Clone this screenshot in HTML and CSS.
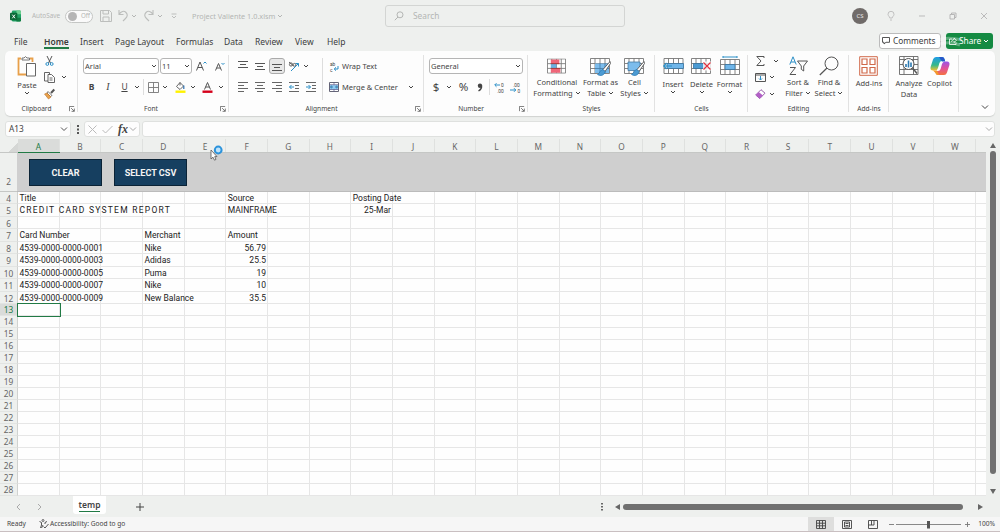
FILE: index.html
```html
<!DOCTYPE html>
<html lang="en">
<head>
<meta charset="UTF-8">
<meta name="viewport" content="width=device-width, initial-scale=1.0">
<title>Project Valiente 1.0.xlsm</title>
<link rel="stylesheet" href="styles.css">
</head>
<body>

<!-- Shared icons -->
<svg class="defs">
    <symbol id="chev" viewBox="0 0 6 4"><path d="M1 1l2 2 2-2" fill="none" stroke="currentColor"/></symbol>
    <symbol id="launch" viewBox="0 0 7 7"><path d="M.5 6V.5H6M2.500 2.500L6 6M6.200 3v3.200H3" fill="none" stroke="#555" stroke-width=".9"/></symbol>
    <symbol id="table" viewBox="0 0 20 16"><path d="M.5.5h19v15H.5zM.5 5.500h19M.5 10.500h19M5 .5v15M10 .5v15M15 .5v15" fill="#fff" stroke="#777" stroke-width=".9"/></symbol>
    <symbol id="brush" viewBox="0 0 14 16"><path d="M13 1L6 9l2 2 5.500-8z" fill="#fff" stroke="#555" stroke-width=".9"/><path d="M6 9C3 9 3 13 .5 14c3 2 7 1 7.500-3z" fill="#4c9bd3" stroke="#2478b5" stroke-width=".7"/></symbol>
</svg>

<div class="titlebar">
    <svg class="logo" viewBox="0 0 12 12"><rect x="2" y="0" width="10" height="12" rx="1.500" fill="#21a366"/><path d="M7 0h3.500Q12 0 12 1.500V4H7z" fill="#6cd08f"/><path d="M7 8h5v2.500Q12 12 10.500 12H7z" fill="#107c41"/><rect y="2.500" width="8" height="8" rx="1" fill="#0b6a37"/><path d="M2.500 4.500l3 4M5.500 4.500l-3 4" stroke="#fff"/></svg>
    <span class="autosave">AutoSave</span>
    <span class="toggle"><i></i>Off</span>
    <svg class="save" width="12" height="12" viewBox="0 0 12 12"><path d="M.5.5h9l2 2v9H.5zM3 .5v3.500h5.500V.5M3 11.500V7h6v4.500" fill="none" stroke="#bcbebc"/></svg>
    <svg class="undo" width="11" height="12" viewBox="0 0 11 12"><path d="M1 0v4.500h4.500M1 4.500C3 1 6 .5 8 2.500s1.500 4-.5 6L5 11" fill="none" stroke="#bcbebc" stroke-width="1.100"/></svg>
    <svg class="chev undo-chev"><use href="#chev"/></svg>
    <svg class="redo" width="11" height="12" viewBox="0 0 11 12"><path d="M10 0v4.500H5.500M10 4.500C8 1 5 .5 3 2.500s-1.500 4 .5 6L6 11" fill="none" stroke="#bcbebc" stroke-width="1.100"/></svg>
    <svg class="chev redo-chev"><use href="#chev"/></svg>
    <svg class="customize" width="6" height="6" viewBox="0 0 6 6"><path d="M.5 1h5M1 3l2 2 2-2" fill="none" stroke="#bcbebc"/></svg>
    <span class="filename">Project Valiente 1.0.xlsm</span>
    <svg class="chev file-chev"><use href="#chev"/></svg>
    <div class="search">
        <svg width="10" height="10" viewBox="0 0 10 10"><circle cx="6" cy="3.800" r="3" fill="none" stroke="#b4b6b4"/><path d="M4 6L.8 9.200" stroke="#b4b6b4"/></svg>
        <span>Search</span>
    </div>
    <div class="window-tools">
        <span class="avatar">CS</span>
        <svg width="8" height="10" viewBox="0 0 8 10"><path d="M2.800 7C2.800 5.500 1 5 1 3.300a3 3 0 0 1 6 0C7 5 5.200 5.500 5.200 7zM3 9h2" fill="none" stroke="#bbb" stroke-width=".9"/></svg>
        <svg width="8" height="10" viewBox="0 0 8 10"><path d="M1 5h6" stroke="#bbb"/></svg>
        <svg width="8" height="10" viewBox="0 0 8 10"><path d="M1 3.500h4.500V8H1zM2.500 3V2h4.500v4.500H6" fill="none" stroke="#b0b0b0" stroke-width=".9"/></svg>
        <svg width="8" height="10" viewBox="0 0 8 10"><path d="M1 2l6 6M7 2L1 8" stroke="#bbb"/></svg>
    </div>
</div>

<div class="tabs">
    <span class="t-file">File</span>
    <span class="t-home active">Home</span>
    <span class="t-insert">Insert</span>
    <span class="t-layout">Page Layout</span>
    <span class="t-formulas">Formulas</span>
    <span class="t-data">Data</span>
    <span class="t-review">Review</span>
    <span class="t-view">View</span>
    <span class="t-help">Help</span>
    <div class="tab-buttons">
        <span class="comments"><svg width="8" height="8" viewBox="0 0 8 8"><path d="M.5.5h7v4.800H4L2 7V5.300H.5z" fill="none" stroke="#444" stroke-width=".9"/></svg>Comments</span>
        <span class="share"><svg width="8" height="8" viewBox="0 0 8 8"><path d="M3 2H.5v5.500H7V5.500M2.500 5Q3 2.500 5 2.500V1l2.500 2.300L5 5.500V4" fill="none" stroke="#fff" stroke-width=".8"/></svg>Share<svg class="chev"><use href="#chev"/></svg></span>
        <svg class="smudge" width="34" height="28" viewBox="0 0 34 28"><path d="M2 6Q12 1 28 5M6 9q10-3 20 1M4 23q12-6 26 0-12 5-26 0" fill="none" stroke="#fff" stroke-width="3"/></svg>
    </div>
</div>

<div class="ribbon">
    <div class="group g-clipboard">
        <div class="body">
            <div class="big">
                <svg width="20" height="21" viewBox="0 0 20 21"><path d="M4 2.500H1.500v16H9M13 2.500h2.500V6" fill="none" stroke="#e8a04a" stroke-width="1.800"/><path d="M5 4V2h2Q8.500-.8 10 2h2.500v2z" fill="#fff" stroke="#666" stroke-width=".9"/><path d="M9.500 7.500h9v12.500h-9z" fill="#fff" stroke="#666"/></svg>
                <span>Paste</span>
                <svg class="chev"><use href="#chev"/></svg>
            </div>
            <div class="clip-tools">
                <svg width="9" height="10" viewBox="0 0 9 10"><path d="M2 0l3.500 7M7 0L3.500 7" stroke="#555"/><circle cx="2.300" cy="8" r="1.400" fill="none" stroke="#2b8fc7"/><circle cx="6.700" cy="8" r="1.400" fill="none" stroke="#2b8fc7"/></svg>
                <svg width="11" height="11" viewBox="0 0 11 11"><path d="M4 9H.5V.5h5v2" fill="none" stroke="#555" stroke-width=".9"/><path d="M4 2.500h3.500l3 3v5H4zM5.500 6h3M5.500 8h3" fill="#fff" stroke="#555" stroke-width=".9"/></svg>
                <svg width="11" height="10" viewBox="0 0 11 10"><path d="M10.300.5L7 4" stroke="#555" stroke-width="2"/><path d="M4 2.500l4 4-1.500 1L3 4z" fill="#fff" stroke="#555" stroke-width=".8"/><path d="M3 4l4 4-2.500 2L.5 5z" fill="#e9a24c" stroke="#b8722a" stroke-width=".6"/></svg>
            </div>
            <svg class="chev"><use href="#chev"/></svg>
        </div>
        <div class="label">Clipboard</div>
        <svg class="launch"><use href="#launch"/></svg>
    </div>

    <div class="group g-font">
        <div class="row row1">
            <span class="select">Arial<svg class="chev"><use href="#chev"/></svg></span>
            <span class="select">11<svg class="chev"><use href="#chev"/></svg></span>
            <svg width="11" height="10" viewBox="0 0 11 10"><path d="M.5 9.500L4 1l3.500 8.500M1.800 6.500h4.400" fill="none" stroke="#555"/><path d="M7.500 2.500L9 1l1.500 1.500" fill="none" stroke="#2b8fc7"/></svg>
            <svg width="10" height="9" viewBox="0 0 10 9"><path d="M.5 8.500L3.500 1.500l3 7M1.600 6h3.800" fill="none" stroke="#555"/><path d="M6.500 1L8 2.500 9.500 1" fill="none" stroke="#2b8fc7"/></svg>
        </div>
        <div class="row row2">
            <b>B</b><em>I</em><u>U</u>
            <svg class="chev"><use href="#chev"/></svg>
            <span class="sep"></span>
            <svg width="11" height="11" viewBox="0 0 11 11"><path d="M.5.5h10v10H.5zM5.500.5v10M.5 5.500h10" fill="none" stroke="#777" stroke-width=".9"/></svg>
            <svg class="chev"><use href="#chev"/></svg>
            <svg width="11" height="11" viewBox="0 0 11 11"><path d="M5 .5L1.500 4.500 5 7.500l3.500-3.500zM5 .5v3" fill="#fff" stroke="#555" stroke-width=".9"/><path d="M8.800 3.500v3.500" stroke="#2b6fb0" stroke-width="1.200"/><path d="M.5 9.700h10" stroke="#fff200" stroke-width="2.400"/></svg>
            <svg class="chev"><use href="#chev"/></svg>
            <svg width="11" height="11" viewBox="0 0 11 11"><path d="M2.500 7.500l3-7 3 7M3.500 5h4" fill="none" stroke="#555"/><path d="M.5 9.700h10" stroke="#d4001a" stroke-width="2.400"/></svg>
            <svg class="chev"><use href="#chev"/></svg>
        </div>
        <div class="label">Font</div>
        <svg class="launch"><use href="#launch"/></svg>
    </div>

    <div class="group g-align">
        <div class="align-body">
            <div class="align-icons">
                <svg width="10" height="10" viewBox="0 0 10 10"><path d="M0 .5h10M2 3.500h6M0 6.500h10" stroke="#555"/></svg>
                <svg width="10" height="10" viewBox="0 0 10 10"><path d="M0 2.500h10M2 5.500h6M0 8.500h10" stroke="#555"/></svg>
                <span class="pressed"><svg width="10" height="10" viewBox="0 0 10 10"><path d="M0 3.500h10M2 6.500h6M0 9.500h10" stroke="#555"/></svg></span>
                <svg width="12" height="11" viewBox="0 0 12 11"><circle cx="3" cy="3.500" r="1.600" fill="none" stroke="#555" stroke-width=".9"/><path d="M1 1l4.500 4" stroke="#555" stroke-width=".9"/><circle cx="6.500" cy="3.800" r="1.400" fill="none" stroke="#555" stroke-width=".9"/><path d="M3 10l7.500-7.500M7.500 2.500h3v3" fill="none" stroke="#2b8fc7"/></svg>
                <svg class="chev"><use href="#chev"/></svg>
                <svg width="10" height="10" viewBox="0 0 10 10"><path d="M0 .5h10M0 3.500h6M0 6.500h10M0 9.500h6" stroke="#555" stroke-width=".9"/></svg>
                <svg width="10" height="10" viewBox="0 0 10 10"><path d="M0 .5h10M2 3.500h6M0 6.500h10M2 9.500h6" stroke="#555" stroke-width=".9"/></svg>
                <svg width="10" height="10" viewBox="0 0 10 10"><path d="M0 .5h10M4 3.500h6M0 6.500h10M4 9.500h6" stroke="#555" stroke-width=".9"/></svg>
                <svg width="10" height="10" viewBox="0 0 10 10"><path d="M0 .5h10M6 3.500h4M6 6.500h4M0 9.500h10" stroke="#555" stroke-width=".9"/><path d="M5 5H.5M2.500 3l-2 2 2 2" fill="none" stroke="#2b8fc7"/></svg>
                <svg width="10" height="10" viewBox="0 0 10 10"><path d="M0 .5h10M6 3.500h4M6 6.500h4M0 9.500h10" stroke="#555" stroke-width=".9"/><path d="M0 5h4.500M2.500 3l2 2-2 2" fill="none" stroke="#2b8fc7"/></svg>
            </div>
            <div class="wrap-merge">
                <div><svg width="10" height="11" viewBox="0 0 10 11"><text x="1" y="4.500" class="icon-text">ab</text><text x="1" y="10.500" class="icon-text">c</text><path d="M9 5v3H5.500M7 6.300L5.200 8 7 9.700" fill="none" stroke="#2b8fc7"/></svg><span>Wrap Text</span></div>
                <div><svg width="10" height="10" viewBox="0 0 10 10"><path d="M.5.5h9v9h-9z" fill="#fff" stroke="#667"/><path d="M1 3h8v4.500H1z" fill="#8fcaf0"/><path d="M.5 2.700h9M.5 7.500h9M5 .5v2M5 7.500v2" stroke="#558"  stroke-width=".7"/><path d="M1.500 5h2.500M6 5h2.500M2.800 3.800L1.500 5l1.300 1.200M7.200 3.800L8.500 5 7.200 6.200" fill="none" stroke="#145f96" stroke-width=".7"/></svg><span>Merge &amp; Center</span><svg class="chev"><use href="#chev"/></svg></div>
            </div>
        </div>
        <div class="label">Alignment</div>
        <svg class="launch"><use href="#launch"/></svg>
    </div>

    <div class="group g-number">
        <div class="row row1"><span class="select">General<svg class="chev"><use href="#chev"/></svg></span></div>
        <div class="row row2">
            <span class="sym">$</span>
            <svg class="chev"><use href="#chev"/></svg>
            <span class="sym">%</span>
            <svg width="6" height="9" viewBox="0 0 6 9"><circle cx="3" cy="2.700" r="2.200" fill="#444"/><path d="M4.500 2.500Q5 6 1.500 8" fill="none" stroke="#444" stroke-width="1.400"/></svg>
            <span class="sep"></span>
            <svg width="11" height="11" viewBox="0 0 11 11"><text x="7" y="4.500" class="icon-text">0</text><text x="3" y="10.500" class="icon-text">.00</text><path d="M6 3H1M2.500 1.200L.7 3l1.800 1.800" fill="none" stroke="#2b8fc7"/></svg>
            <svg width="11" height="11" viewBox="0 0 11 11"><text x="3" y="4.500" class="icon-text">.00</text><text x="7.500" y="10.500" class="icon-text">0</text><path d="M0 8h5.500M4 6.200L5.800 8 4 9.800" fill="none" stroke="#2b8fc7"/></svg>
        </div>
        <div class="label">Number</div>
        <svg class="launch"><use href="#launch"/></svg>
    </div>

    <div class="group g-styles">
        <div class="body">
            <div class="big">
                <svg width="19" height="17" viewBox="0 0 20 17"><use href="#table" width="20" height="16"/><path d="M4 1h9v4.500H4zM4 10.500h10V15H4z" fill="#ef6679"/><path d="M4 5.500h6v5H4z" fill="#6cb0e2"/><path d="M4 5.500h9M4 10.500h10" stroke="#a33"/></svg>
                <span>Conditional<br>Formatting <svg class="chev"><use href="#chev"/></svg></span>
            </div>
            <div class="big">
                <svg width="21" height="17" viewBox="0 0 21 17"><use href="#table" width="20" height="16"/><path d="M5 5.500h14v9.500H5z" fill="#7cbcec"/><path d="M5 10.500h14M10 5v10M15 5v10" stroke="#4178a5" stroke-width=".8"/><use href="#brush" x="7" y="2" width="14" height="17"/></svg>
                <span>Format as<br>Table <svg class="chev"><use href="#chev"/></svg></span>
            </div>
            <div class="big">
                <svg width="21" height="17" viewBox="0 0 21 17"><use href="#table" width="20" height="16"/><path d="M4 4h12v8.500H4z" fill="#7cbcec" stroke="#4178a5" stroke-width=".8"/><use href="#brush" x="7" y="2" width="14" height="17"/></svg>
                <span>Cell<br>Styles <svg class="chev"><use href="#chev"/></svg></span>
            </div>
        </div>
        <div class="label">Styles</div>
    </div>

    <div class="group g-cells">
        <div class="body">
            <div class="big">
                <svg width="21" height="17" viewBox="0 0 21 17"><use href="#table" width="21" height="16"/><path d="M4 5.500h16.500v5H4z" fill="#6fb6ea" stroke="#37739f" stroke-width=".8"/><path d="M9 8H1M3.500 5L.8 8l2.700 3" fill="none" stroke="#2b8fc7" stroke-width="1.200"/></svg>
                <span>Insert</span><svg class="chev"><use href="#chev"/></svg>
            </div>
            <div class="big">
                <svg width="21" height="17" viewBox="0 0 21 17"><use href="#table" width="20" height="16"/><path d="M2.500 5.500h11v5h-11z" fill="#4c9bd3" stroke="#37739f" stroke-width=".8"/><path d="M12 3.500h8v9h-8z" fill="#fff" opacity=".8"/><path d="M12.500 4.500l7 7M19.500 4.500l-7 7" stroke="#e0303e" stroke-width="1.200"/></svg>
                <span>Delete</span><svg class="chev"><use href="#chev"/></svg>
            </div>
            <div class="big">
                <svg width="20" height="19" viewBox="0 0 20 19"><path d="M3 1h14M3 0v2M17 0v2" stroke="#2b8fc7"/><use href="#table" y="3" width="20" height="16"/><path d="M5 8.500h10v5H5z" fill="#6fb6ea" stroke="#37739f" stroke-width=".8"/></svg>
                <span>Format</span><svg class="chev"><use href="#chev"/></svg>
            </div>
        </div>
        <div class="label">Cells</div>
    </div>

    <div class="group g-editing">
        <div class="body">
            <div class="edit-tools">
                <svg width="9" height="10" viewBox="0 0 9 10"><path d="M8 2V.5H.8L5 5 .8 9.500H8V8" fill="none" stroke="#555"/></svg><svg class="chev sum-chev"><use href="#chev"/></svg>
                <svg width="11" height="9" viewBox="0 0 11 9"><path d="M.5.5h10v8H.5zM.5 2h10" fill="none" stroke="#555"/><path d="M5.500 3v4M4 5.500L5.500 7 7 5.500" fill="none" stroke="#2b8fc7"/></svg><svg class="chev"><use href="#chev"/></svg>
                <svg width="11" height="10" viewBox="0 0 11 10"><path d="M.7 6L6 .7l4 3.500L4.800 9.500z" fill="#fff" stroke="#8a4a9e" stroke-width=".9"/><path d="M.7 6l3-3L8 6.500l-3.200 3z" fill="#b25fc6"/></svg><svg class="chev"><use href="#chev"/></svg>
            </div>
            <div class="big">
                <svg width="19" height="20" viewBox="0 0 19 20"><path d="M.8 8.500L4 .8l3.200 7.700M2 6h4" fill="none" stroke="#2b8fc7"/><path d="M1 11.500h5.500L1 18.500h6" fill="none" stroke="#555"/><path d="M8.500 5h10l-3.800 5v5l-2.400-1.700V10z" fill="none" stroke="#555"/></svg>
                <span>Sort &amp;<br>Filter <svg class="chev"><use href="#chev"/></svg></span>
            </div>
            <div class="big">
                <svg width="20" height="20" viewBox="0 0 20 20"><circle cx="12.500" cy="7.500" r="6.500" fill="none" stroke="#555"/><path d="M8 12L.8 19" stroke="#555" stroke-width="1.200"/></svg>
                <span>Find &amp;<br>Select <svg class="chev"><use href="#chev"/></svg></span>
            </div>
        </div>
        <div class="label">Editing</div>
    </div>

    <div class="group g-addins">
        <div class="body">
            <div class="big">
                <svg width="19" height="20" viewBox="0 0 19 20"><path d="M.7.700h17.600v18.600H.7z" fill="#fff" stroke="#d0694a"/><path d="M3 3h5v5.500H3zM11 3h5v5.500h-5zM3 11.500h5V17H3zM11 11.500h5V17h-5z" fill="none" stroke="#d0694a" stroke-width="1.200"/></svg>
                <span>Add-ins</span>
            </div>
        </div>
        <div class="label">Add-ins</div>
    </div>

    <div class="group g-copilot">
        <div class="body">
            <div class="big">
                <svg width="20" height="20" viewBox="0 0 20 20"><path d="M.5.500h18.500v18H.5zM.5 3.500H19M.5 8.500H19M.5 13.500H19M5 .5v18M14.500 .5v18" fill="none" stroke="#666" stroke-width=".9"/><circle cx="9.500" cy="8" r="5.500" fill="#fff" stroke="#555"/><path d="M7 11V8M9.500 11.500V4.500M12 11V6.500" stroke="#2b78b0" stroke-width="1.600"/><path d="M13.500 12l4.500 5.500" stroke="#555" stroke-width="1.500"/></svg>
                <span>Analyze<br>Data</span>
            </div>
            <div class="big">
                <svg width="20" height="20" viewBox="0 0 20 20">
                    <defs>
                        <linearGradient id="cp1" x1="0" y1="0" x2="0" y2="1"><stop offset="0" stop-color="#1f9be8"/><stop offset=".6" stop-color="#35b98a"/><stop offset="1" stop-color="#f2c230"/></linearGradient>
                        <linearGradient id="cp2" x1="0" y1="0" x2="0" y2="1"><stop offset="0" stop-color="#9a55e8"/><stop offset=".5" stop-color="#e1529b"/><stop offset="1" stop-color="#f4713f"/></linearGradient>
                    </defs>
                    <path d="M6 1h6q2 0 2.500 2l.5 2h-3q-2 0-2.600 2L8 12q-.6 2.500-3 2.500H3Q0 14.500.6 11L3 3.500Q3.800 1 6 1z" fill="url(#cp1)"/>
                    <path d="M14 19H8q-2 0-2.500-2L5 15h3q2 0 2.600-2L12 8q.6-2.500 3-2.500h2q3 0 2.400 3.500L17 16.500Q16.200 19 14 19z" fill="url(#cp2)"/>
                    <path d="M9 1h3q2 0 2.500 2l.6 2.500H12z" fill="#2757c9"/>
                    <path d="M3 14.500h4L9 19H8q-2 0-2.500-2z" fill="#f39a2d"/>
                </svg>
                <span>Copilot</span>
            </div>
        </div>
    </div>
    <svg class="collapse" width="8" height="6" viewBox="0 0 8 6"><path d="M1 1.500l3 3 3-3" fill="none" stroke="#444"/></svg>
</div>

<div class="formula-bar">
    <div class="name-box">A13<svg width="8" height="6" viewBox="0 0 8 6"><path d="M1 1.500l3 3 3-3" fill="none" stroke="#555"/></svg></div>
    <svg class="dots" width="2" height="9" viewBox="0 0 2 9"><path d="M0 0h2v2H0zM0 3.500h2v2H0zM0 7h2v2H0z" fill="#555"/></svg>
    <div class="fx-box">
        <svg width="9" height="9" viewBox="0 0 9 9"><path d="M.5.500l8 8M8.500.5l-8 8" stroke="#bbb"/></svg>
        <svg width="11" height="9" viewBox="0 0 11 9"><path d="M.5 5L3.500 8l7-7" fill="none" stroke="#bbb"/></svg>
        <span class="fx">fx</span>
        <svg class="gray" width="8" height="6" viewBox="0 0 8 6"><path d="M1 1.500l3 3 3-3" fill="none" stroke="#aaa"/></svg>
    </div>
    <div class="formula"><svg width="8" height="6" viewBox="0 0 8 6"><path d="M1 1.500l3 3 3-3" fill="none" stroke="#aaa"/></svg></div>
</div>

<div class="sheet-area">
    <div class="sheet">
        <div class="col-heads" id="colHeads"><span class="corner"></span></div>
        <div class="banner">
            <div class="banner-head">2</div>
            <div class="banner-body">
                <button>CLEAR</button>
                <button>SELECT CSV</button>
            </div>
        </div>
        <div class="rows" id="rows"></div>
        <svg class="pointer" width="14" height="16" viewBox="0 0 14 16"><circle cx="9.200" cy="5" r="3.400" fill="#bfe3fa" stroke="#2c93db" stroke-width="2"/><path d="M2 5v9l2-1.800 1.500 3 1.500-.8-1.300-2.800H8z" fill="#fff" stroke="#555" stroke-width=".8"/></svg>
    </div>
    <div class="vscroll"><i class="up"></i><i class="thumb"></i><i class="down"></i></div>
</div>

<div class="sheet-tabs">
    <svg class="prev" width="5" height="8" viewBox="0 0 5 8"><path d="M4 1L1 4l3 3" fill="none" stroke="#aaa"/></svg>
    <svg class="next" width="5" height="8" viewBox="0 0 5 8"><path d="M1 1l3 3-3 3" fill="none" stroke="#aaa"/></svg>
    <div class="sheet-tab"><span>temp</span></div>
    <svg class="plus" width="8" height="8" viewBox="0 0 8 8"><path d="M4 0v8M0 4h8" stroke="#444"/></svg>
    <svg class="grip" width="2" height="8" viewBox="0 0 2 8"><path d="M0 0h2v1.500H0zM0 3h2v1.500H0zM0 6h2v1.500H0z" fill="#666"/></svg>
    <i class="left"></i>
    <div class="hscroll"><i class="thumb"></i></div>
    <i class="right"></i>
</div>

<div class="status">
    <span class="ready">Ready</span>
    <svg class="access" width="10" height="10" viewBox="0 0 10 10"><circle cx="4" cy="1.500" r="1" fill="none" stroke="#444" stroke-width=".8"/><path d="M.5 2.500l2 1v2.500L1.500 9M8 2.500l-2 1V5M2.500 9L4 6M4.500 7.500L6 9l3.500-4" fill="none" stroke="#444" stroke-width=".9"/></svg>
    <span>Accessibility: Good to go</span>
    <div class="view-tools">
        <span class="view on"><svg width="10" height="9" viewBox="0 0 10 9"><path d="M.5.500h9v8h-9zM.5 3.200h9M.5 5.800h9M3.500.5v8M6.500.5v8" fill="none" stroke="#444" stroke-width=".9"/></svg></span>
        <span class="view"><svg width="10" height="9" viewBox="0 0 10 9"><path d="M.5.500h9v8h-9zM2.500 2h5v5h-5zM3.500 3.500h3M3.500 5.500h3" fill="none" stroke="#444" stroke-width=".9"/></svg></span>
        <span class="view"><svg width="10" height="9" viewBox="0 0 10 9"><path d="M.5.500h9v8h-9zM.5 5H6V.5M3.500.5V5" fill="none" stroke="#444" stroke-width=".9"/></svg></span>
        <svg class="zoom" width="84" height="9" viewBox="0 0 84 9"><path d="M1 4.500h5M77 4.500h5M79.500 2v5" stroke="#777" stroke-width=".9"/><path d="M8 4.500h65" stroke="#888"/><path d="M39 1h3v7.500h-3z" fill="#555"/></svg>
        <span>100%</span>
    </div>
</div>

<script>
    const columns = 'ABCDEFGHIJKLMNOPQRSTUVW'.split('');

    // Cell values by row number and column letter
    const cells = {
        4: { A: 'Title', F: 'Source', I: 'Posting Date' },
        5: { A: 'CREDIT CARD SYSTEM REPORT', F: 'MAINFRAME', I: '25-Mar' },
        7: { A: 'Card Number', D: 'Merchant', F: 'Amount' },
        8: { A: '4539-0000-0000-0001', D: 'Nike', F: 56.79 },
        9: { A: '4539-0000-0000-0003', D: 'Adidas', F: 25.5 },
        10: { A: '4539-0000-0000-0005', D: 'Puma', F: 19 },
        11: { A: '4539-0000-0000-0007', D: 'Nike', F: 10 },
        12: { A: '4539-0000-0000-0009', D: 'New Balance', F: 35.5 },
    };

    const heads = document.getElementById('colHeads');
    columns.forEach(c => {
        const el = document.createElement('span');
        el.className = c === 'A' ? 'col current' : 'col';
        el.textContent = c;
        heads.appendChild(el);
    });

    const rows = document.getElementById('rows');
    for (let r = 4; r <= 28; r++) {
        const row = document.createElement('div');
        row.className = r < 13 ? 'line tall' : 'line';
        const num = document.createElement('span');
        num.className = r === 13 ? 'num current' : 'num';
        num.textContent = r;
        row.appendChild(num);
        // one extra column, cut off at the right edge
        columns.concat('X').forEach(c => {
            const cell = document.createElement('span');
            const value = cells[r] && cells[r][c];
            cell.className = 'cell';
            if (value !== undefined) {
                cell.textContent = value;
                if (typeof value === 'number' || value === '25-Mar') cell.classList.add('right');
            }
            if (r === 5 && c === 'A') cell.classList.add('spaced');
            if (r === 13 && c === 'A') cell.classList.add('selected');
            row.appendChild(cell);
        });
        rows.appendChild(row);
    }
</script>

</body>
</html>
```

FILE: styles.css
```css
* {
    box-sizing: border-box;
}
body {
    margin: 0;
    width: 1000px;
    height: 532px;
    overflow: hidden;
    display: flex;
    flex-direction: column;
    background: #eef0ee;
    color: #444;
    font-family: "Noto Sans", "Open Sans", sans-serif;
    font-size: 7.5px;
    line-height: 10px;
}
svg {
    display: block;
    flex: none;
    overflow: visible;
}
.defs {
    position: absolute;
    width: 0;
    height: 0;
}
.chev {
    width: 6px;
    height: 4px;
}
.icon-text {
    font-family: Roboto, sans-serif;
    font-size: 4.8px;
    fill: #444;
}

/* Title bar */
.titlebar {
    height: 32px;
    flex: none;
    display: flex;
    align-items: center;
    padding-left: 10px;
    color: #b4b6b4;
    white-space: nowrap;
}
.logo {
    width: 11px;
    height: 12px;
}
.autosave {
    width: 33px;
    margin-left: 11px;
    font-size: 6.4px;
}
.toggle {
    width: 28px;
    height: 13px;
    display: flex;
    align-items: center;
    gap: 4px;
    padding-left: 2px;
    border: 1px solid #c4c6c4;
    border-radius: 7px;
    background: #fafafa;
    font-size: 6.2px;
}
.toggle i {
    width: 9px;
    height: 9px;
    border-radius: 50%;
    background: #b5b5b5;
}
.save { margin-left: 7px; }
.undo { margin-left: 6px; }
.undo-chev { margin-left: 2px; }
.redo { margin-left: 6px; }
.redo-chev { margin-left: 3px; }
.customize { margin-left: 8px; }
.filename {
    width: 84px;
    margin-left: 15px;
    font-size: 7.3px;
}
.file-chev {
    width: 8px;
}
.search {
    width: 240px;
    height: 22px;
    margin-left: 101px;
    padding-left: 8px;
    display: flex;
    align-items: center;
    gap: 9px;
    border: 1px solid #d3d5d3;
    border-radius: 3px;
    font-size: 8.3px;
}
.window-tools {
    display: flex;
    align-items: center;
    gap: 23px;
    margin-left: 227px;
}
.avatar {
    width: 16px;
    height: 16px;
    margin-right: -4px;
    border-radius: 50%;
    background: #706b69;
    color: #e6e6e6;
    font-size: 6px;
    line-height: 16px;
    text-align: center;
}

/* Menu tabs */
.tabs {
    height: 19px;
    flex: none;
    display: flex;
    padding: 4px 0 0 14px;
    font-size: 8.5px;
    line-height: 12px;
    color: #3c3c3c;
    white-space: nowrap;
}
.t-file { width: 30px; }
.t-home { width: 25px; margin-right: 11px; }
.t-insert { width: 35px; }
.t-layout { width: 61px; }
.t-formulas { width: 48px; }
.t-data { width: 31px; }
.t-review { width: 40px; }
.t-view { width: 32px; }
.tabs .active {
    height: 13px;
    font-weight: 600;
    border-bottom: 2px solid #217a45;
}
.tab-buttons {
    position: relative;
    display: flex;
    gap: 5px;
    margin: -3px 7px 0 auto;
}
.comments, .share {
    height: 16px;
    display: flex;
    align-items: center;
    gap: 3px;
    border-radius: 3px;
    font-size: 8.3px;
}
.comments {
    width: 62px;
    padding-left: 2px;
    border: 1px solid #bbb;
    background: #fff;
}
.share {
    width: 47px;
    padding-left: 3px;
    gap: 2px;
    background: #148a42;
    color: #fff;
}
.smudge {
    position: absolute;
    left: 55px;
    top: 2px;
    opacity: .3;
}

/* Ribbon */
.ribbon {
    height: 65px;
    flex: none;
    display: flex;
    position: relative;
    margin: 0 5px;
    border-radius: 5px;
    background: #fdfdfd;
    box-shadow: 0 1px 1px #d0d2d0;
    white-space: nowrap;
}
.group {
    position: relative;
    height: 65px;
    padding-top: 7px;
    display: flex;
    flex-direction: column;
}
.group::after {
    content: "";
    position: absolute;
    right: 0;
    top: 4px;
    bottom: 4px;
    width: 1px;
    background: #e2e2e2;
}
.g-clipboard { width: 73px; padding-left: 10px; }
.g-font { width: 151px; padding-left: 5px; }
.g-align { width: 195px; }
.g-number { width: 104px; padding-left: 5px; }
.g-styles { width: 127px; }
.g-cells { width: 93px; }
.g-editing { width: 101px; }
.g-addins { width: 40px; }
.g-copilot { width: 70px; }
.label {
    margin-top: auto;
    height: 12px;
    font-size: 6.6px;
    text-align: center;
}
.g-clipboard .label { margin-left: -10px; margin-right: 10px; }
.g-font .label { margin-right: 10px; }
.g-align .label { margin-right: 10px; }
.g-number .label { margin-right: 15px; }
.launch {
    position: absolute;
    right: 3px;
    bottom: 4px;
    width: 6px;
    height: 6px;
}
.body {
    display: flex;
    height: 40px;
}
.big {
    display: flex;
    flex-direction: column;
    align-items: center;
    line-height: 10.5px;
    text-align: center;
}
.big > svg:first-child {
    margin-bottom: auto;
}
.big span + .chev {
    margin: 1px 0 -1px;
}
.big span .chev {
    display: inline-block;
    vertical-align: 1px;
}
.g-clipboard .big {
    width: 24px;
    height: 36px;
}
.g-cells .big {
    height: 35px;
}
.g-clipboard .big > svg:first-child {
    margin-top: -2px;
}
.g-clipboard .body > .chev {
    margin: 17px 0 0 2px;
}
.clip-tools {
    width: 20px;
    margin-top: -2px;
    height: 43px;
    display: flex;
    flex-direction: column;
    justify-content: space-between;
    align-items: center;
}
.row {
    height: 16px;
    display: grid;
    align-items: center;
    justify-items: center;
}
.row2 {
    margin-top: 5px;
}
.select {
    width: 100%;
    height: 16px;
    display: flex;
    align-items: center;
    justify-content: space-between;
    padding: 0 1px;
    border: 1px solid #b5b5b5;
    border-radius: 3px;
    background: #fff;
    font-size: 7.5px;
}
.g-font .row1 {
    grid-template-columns: 76px 32px 17px 17px;
    column-gap: 1px;
}
.g-font .row2 {
    grid-template-columns: 17px 16px 17px 8px 5px 14px 10px 21px 4px 25px 2px;
    font-size: 8.5px;
}
.g-font em {
    font-family: "Liberation Serif", serif;
    font-size: 10px;
}
.sep {
    width: 1px;
    height: 16px;
    background: #ddd;
}
.align-body {
    display: flex;
    height: 42px;
}
.align-icons {
    display: grid;
    grid-template-columns: repeat(3, 17px) 18px 16px;
    grid-template-rows: 16px 16px;
    row-gap: 5px;
    width: 94px;
    padding-left: 5px;
    justify-items: center;
    align-items: center;
    border-right: 1px solid #ddd;
}
.align-icons .chev {
    justify-self: start;
}
.pressed {
    width: 16px;
    height: 16px;
    padding: 2px;
    border: 1px solid #aaa;
    border-radius: 3px;
    background: #e8e8e8;
}
.wrap-merge div {
    display: flex;
    align-items: center;
    height: 16px;
    margin-bottom: 5px;
    padding-left: 6px;
    gap: 3px;
}
.wrap-merge .chev {
    margin-left: 7px;
}
.g-number .row1 {
    grid-template-columns: 94px;
}
.g-number .row2 {
    grid-template-columns: 14px 12px 17px 15px 5px 14px 19px;
}
.sym {
    font-size: 11.5px;
}
.g-styles .body {
    display: grid;
    grid-template-columns: 58px 29px 39px;
    justify-items: center;
}
.g-cells .body {
    display: grid;
    grid-template-columns: 36px 21px 35px;
    justify-items: center;
}
.g-cells .big:last-child > svg:first-child {
    margin-top: -2px;
}
.g-editing .body {
    display: grid;
    grid-template-columns: 35px 30px 32px;
    grid-template-rows: 40px;
    justify-items: center;
}
.edit-tools {
    display: grid;
    grid-template-columns: 12px 10px;
    justify-items: center;
    align-items: center;
    height: 49px;
    margin-top: -5px;
}
.sum-chev {
    margin-left: 8px;
}
.g-addins .body {
    justify-content: center;
}
.g-addins .big, .g-copilot .big {
    justify-content: flex-start;
}
.g-addins .big > svg:first-child, .g-copilot .big > svg:first-child {
    margin-top: -2px;
    margin-bottom: 2px;
}
.g-editing .big > svg:first-child {
    margin-top: -2px;
}
.g-copilot .body {
    display: grid;
    grid-template-columns: 40px 21px;
    justify-items: center;
}
.collapse {
    margin: 53px 0 0 22px;
}

/* Formula bar */
.formula-bar {
    height: 23px;
    flex: none;
    display: flex;
    align-items: flex-start;
    padding: 5px 5px 0;
    font-size: 8.3px;
}
.formula-bar > div {
    height: 16px;
    display: flex;
    align-items: center;
    border: 1px solid #dfe1df;
    border-radius: 3px;
    background: #fdfdfd;
}
.name-box {
    width: 66px;
    padding: 0 2px 0 3px;
    justify-content: space-between;
}
.dots {
    margin: 4px 5px 0 6px;
}
.fx-box {
    width: 56px;
    margin-right: 2px;
    padding-left: 3px;
    gap: 5px;
}
.fx {
    font: italic bold 12px "Liberation Serif", serif;
}
.fx-box .gray {
    margin-left: -4px;
}
.formula {
    flex: 1;
    justify-content: flex-end;
    padding-right: 1px;
}

/* Sheet */
.sheet-area {
    height: 357px;
    flex: none;
    display: flex;
}
.sheet {
    position: relative;
    width: 986px;
    overflow: hidden;
}
.col-heads {
    height: 14px;
    display: flex;
    line-height: 16px;
    font-size: 8.3px;
    color: #666;
    border-bottom: 1px solid #c5c7c5;
}
.corner {
    width: 18px;
    flex: none;
    background: linear-gradient(135deg, transparent 68%, #d5d7d5 68%);
}
.col {
    width: 41.66px;
    flex: none;
    text-align: center;
    border-right: 1px solid #dfe1df;
}
.col.current {
    background: #dadcda;
    color: #217a45;
    box-shadow: 0 1px 0 #217a45;
}
.banner {
    height: 39px;
    display: flex;
}
.banner-head {
    width: 17px;
    padding-top: 24px;
    text-align: center;
    font-size: 8.3px;
    color: #666;
    border-bottom: 1px solid #c5c7c5;
}
.banner-body {
    flex: 1;
    display: flex;
    gap: 12px;
    padding: 6px 0 0 12px;
    background: #cfcfcf;
    border-bottom: 1px solid #bbb;
}
.banner button {
    width: 73px;
    height: 27px;
    padding: 0;
    border: 1px solid #0b2336;
    background: #163f60;
    color: #f4f4f4;
    font: bold 9.1px Roboto, sans-serif;
}
.line {
    display: flex;
    height: 12px;
    line-height: 12px;
    white-space: nowrap;
}
.line.tall {
    height: 12.45px;
    line-height: 13px;
}
.num {
    width: 18px;
    flex: none;
    text-align: center;
    font-size: 8.3px;
    color: #666;
    border-right: 1px solid #d0d2d0;
    border-bottom: 1px solid #e2e4e2;
}
.num.current {
    background: #dadcda;
    color: #217a45;
}
.cell {
    width: 41.66px;
    flex: none;
    padding: 0 1px 0 1.5px;
    font-family: Roboto, sans-serif;
    font-size: 8.5px;
    color: #222;
    background: #fefefe;
    border-right: 1px solid #e6e6e6;
    border-bottom: 1px solid #e6e6e6;
}
/* text runs over the empty cells beside it */
.cell:not(:empty) {
    position: relative;
}
.cell.right {
    text-align: right;
}
.cell.spaced {
    letter-spacing: 1.25px;
}
.cell.selected {
    position: relative;
    outline: 1px solid #217a45;
}
.pointer {
    position: absolute;
    left: 209px;
    top: 6px;
}
.vscroll {
    width: 14px;
    display: flex;
    flex-direction: column;
    align-items: center;
    padding-top: 4px;
}
.vscroll .up, .vscroll .down {
    border: 3px solid transparent;
}
.vscroll .up {
    border-top: 0;
    border-bottom: 5px solid #666;
}
.vscroll .down {
    border-bottom: 0;
    border-top: 5px solid #666;
    margin-top: 15px;
}
.vscroll .thumb {
    width: 6px;
    height: 323px;
    margin-top: 3px;
    border-radius: 3px;
    background: #707070;
}

/* Sheet tabs */
.sheet-tabs {
    height: 21px;
    flex: none;
    display: flex;
    align-items: center;
}
.prev { margin-left: 16px; }
.next { margin-left: 16px; }
.sheet-tab {
    width: 33px;
    height: 18px;
    margin: -3px 0 0 31px;
    background: #fff;
    border-radius: 0 0 3px 3px;
    text-align: center;
    font-size: 8.5px;
    font-weight: 600;
    line-height: 13px;
}
.sheet-tab span {
    display: inline-block;
    margin-top: 2px;
    border-bottom: 1px solid #217a45;
}
.plus { margin-left: 30px; }
.grip { margin-left: 457px; }
.sheet-tabs .left, .sheet-tabs .right {
    border: 3px solid transparent;
}
.sheet-tabs .left {
    border-left: 0;
    border-right: 5px solid #666;
    margin-left: 12px;
}
.sheet-tabs .right {
    border-right: 0;
    border-left: 5px solid #666;
}
.hscroll {
    width: 355px;
    margin-left: 3px;
}
.hscroll .thumb {
    display: block;
    width: 340px;
    height: 6px;
    border-radius: 3px;
    background: #707070;
}

/* Status bar */
.status {
    flex: 1;
    display: flex;
    align-items: center;
    padding-left: 7px;
    background: #f6f6f6;
    border-bottom: 1px solid #c9bfc1;
    font-size: 6.6px;
    white-space: nowrap;
}
.ready {
    width: 32px;
}
.access {
    margin-right: 1px;
}
.view-tools {
    display: flex;
    align-items: center;
    margin-left: auto;
    padding-right: 5px;
}
.view {
    width: 26px;
    height: 14px;
    display: flex;
    align-items: center;
    justify-content: center;
}
.view.on {
    background: #dededd;
}
.zoom {
    margin: 0 6px 0 2px;
}
```
